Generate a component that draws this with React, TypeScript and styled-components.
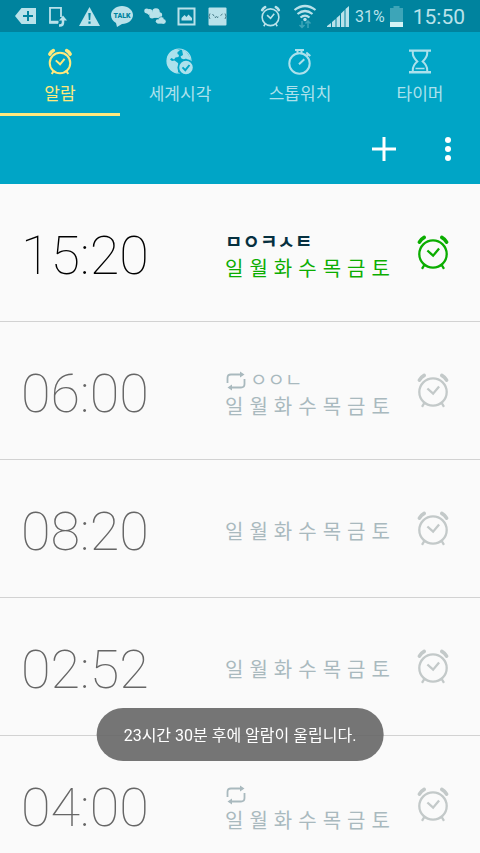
import React, { useState } from "react";
import styled, { createGlobalStyle } from "styled-components";

const GlobalStyle = createGlobalStyle`
  *, *::before, *::after { box-sizing: border-box; }
  body {
    margin: 0;
    background: #fafafa;
    font-family: Roboto, "Noto Sans CJK KR", sans-serif;
  }
  button { font: inherit; color: inherit; background: none; border: 0; padding: 0; cursor: pointer; }
  svg { display: block; flex: none; }
`;

const Screen = styled.div`
  display: flex;
  flex-direction: column;
  height: 100vh;
  overflow: hidden;
`;

const StatusBar = styled.header`
  display: flex;
  align-items: center;
  justify-content: space-between;
  flex: none;
  height: 32px;
  padding: 0 15px;
  background: #00839e;
  color: #b9e2ea;
`;

const StatusGroup = styled.div<{ $gap: number }>`
  display: flex;
  align-items: center;
  gap: ${(p) => p.$gap}px;
`;

const Battery = styled.span`
  font-size: 16px;
  line-height: 20px;
  margin: 2px -1px 0 0;
`;

const Clock = styled.time`
  font-size: 21px;
  line-height: 32px;
  margin: 2px 0 0 4px;
`;

const Tabs = styled.nav`
  display: grid;
  grid-template-columns: repeat(4, 1fr);
  flex: none;
  height: 84px;
  background: #00a5c6;
`;

const Tab = styled.button<{ $active: boolean }>`
  display: flex;
  flex-direction: column;
  align-items: center;
  gap: 7px;
  padding-top: 16px;
  border-bottom: 3px solid ${(p) => (p.$active ? "#ffe97d" : "transparent")};
  color: ${(p) => (p.$active ? "#ffe97d" : "#ace1ec")};
  font-size: 17px;
  line-height: 24px;
`;

const ActionBar = styled.div`
  display: flex;
  justify-content: flex-end;
  align-items: center;
  flex: none;
  gap: 24px;
  height: 68px;
  padding: 0 16px 2px;
  background: #00a5c6;
  color: #ffffff;
`;

const IconButton = styled.button`
  display: grid;
  place-items: center;
  width: 32px;
  height: 40px;
  margin-left: 8px;
`;

const AlarmList = styled.ul`
  flex: 1;
  min-height: 0;
  margin: 0;
  padding: 0;
  list-style: none;
  overflow-y: auto;
  scrollbar-width: none;
`;

const AlarmRow = styled.li`
  display: flex;
  align-items: center;
  height: 138px;
  padding: 6px 30px 0 21px;
  border-bottom: 1px solid #d2d2d2;
`;

const AlarmTime = styled.time<{ $on: boolean }>`
  flex: 1;
  font-weight: 100;
  font-size: 54px;
  line-height: 64px;
  color: ${(p) => (p.$on ? "#000000" : "#666666")};
`;

const Details = styled.div`
  width: 165px;
  margin-right: 26px;
`;

const Caption = styled.div<{ $on: boolean }>`
  display: flex;
  align-items: center;
  gap: 3px;
  height: 26px;
  font-size: 19px;
  line-height: 26px;
  font-weight: ${(p) => (p.$on ? 700 : 400)};
  color: ${(p) => (p.$on ? "#06303f" : "#a9b9be")};
`;

const Days = styled.div<{ $on: boolean }>`
  display: flex;
  justify-content: space-between;
  font-size: 20px;
  line-height: 26px;
  color: ${(p) => (p.$on ? "#0bad00" : "#a9b9be")};
`;

const AlarmToggle = styled.button<{ $on: boolean }>`
  padding-bottom: 8px;
  color: ${(p) => (p.$on ? "#0bad00" : "#c3c9c9")};
`;

const Toast = styled.div`
  position: fixed;
  bottom: 92px;
  left: 50%;
  transform: translateX(-50%);
  padding: 15px 27px 13px;
  border-radius: 27px;
  background: rgba(102, 102, 102, 0.9);
  color: #ffffff;
  font-size: 16px;
  line-height: 25px;
  white-space: nowrap;
`;

function AlarmIcon({ width, height, stroke = 2.3, bell = 3.6 }: { width: number; height: number; stroke?: number; bell?: number }) {
  return (
    <svg width={width} height={height} viewBox="0 0 34 36" fill="none" stroke="currentColor" aria-hidden="true">
      <circle cx="17" cy="20" r="13.700" strokeWidth={stroke} />
      <path d="M11.400 16.500l5.700 5.200 6-7.200M8.600 30.500L6 34.800M25.400 30.500l2.600 4.300" strokeWidth={stroke} />
      <path d="M3.400 8.200Q5 5.200 8.200 3.400M30.600 8.200Q29 5.200 25.800 3.400" strokeWidth={bell} strokeLinecap="round" />
    </svg>
  );
}

function GlobeIcon() {
  return (
    <svg width="28" height="27" viewBox="0 0 28 27" fill="none" aria-hidden="true">
      <circle cx="13" cy="13" r="12" stroke="currentColor" strokeWidth="1.200" />
      <path
        fill="currentColor"
        d="M1.200 10C3 4.500 7 1.500 11 1.200L14 2.500 11.500 4 11.500 6 13 7 12.500 9 9.500 9.500 8 11.500 5.500 10 4 11.500 6 13 8.500 12.500 12 15 13 18 12 20.500 12 24.800C5 24.500 1 19 1 13ZM16 1.500L20 3.500 24 9 24.500 13 21.500 12 20 10.500 18 11.500 15.500 10.500 14.500 8.500 17 7Z"
      />
      <circle cx="20" cy="19.500" r="7.700" fill="currentColor" stroke="#00a5c6" strokeWidth="1.800" />
      <path d="M16.500 19.300l2.800 2.900 4.200-5.200" stroke="#00a5c6" strokeWidth="1.900" />
    </svg>
  );
}

function StopwatchIcon() {
  return (
    <svg width="26" height="27" viewBox="0 0 26 27" fill="none" stroke="currentColor" strokeWidth="2" aria-hidden="true">
      <circle cx="12.500" cy="15.500" r="10.200" />
      <path d="M8 2h9M10.500 2v3.500M14.500 2v3.500M19.300 4.500l4 3.600M21.200 6.300l-2 2M12 16.300l5.300-5" />
    </svg>
  );
}

function HourglassIcon() {
  return (
    <svg width="26" height="27" viewBox="0 0 26 27" fill="none" stroke="currentColor" strokeWidth="2" aria-hidden="true">
      <path d="M2 2.600h22M2 24.300h22" strokeWidth="2.400" />
      <path d="M5.800 3v2.500q0 3.500 4.500 8-4.500 4-4.500 8.500v2M20.200 3v2.500q0 3.500-4.500 8 4.500 4 4.500 8.500v2" />
      <path d="M8.500 20.500h9" strokeWidth="1.500" />
    </svg>
  );
}

function RepeatIcon() {
  return (
    <svg width="22" height="20" viewBox="0 0 22 20" fill="none" stroke="currentColor" strokeWidth="1.800" aria-hidden="true">
      <path d="M2.500 12V7q0-3.500 3.500-3.500H16M19.500 8v5q0 3.500-3.500 3.500H6" />
      <path d="M15 .6L19.500 3.500 15 6.400ZM7 13.600L2.500 16.500 7 19.400Z" fill="currentColor" stroke="none" />
    </svg>
  );
}

function NotificationIcons() {
  return (
    <StatusGroup $gap={11} aria-label="알림">
      <svg width="22" height="18" viewBox="0 0 22 18">
        <path d="M0 9L6.500 1H21v16H6.500Z" fill="currentColor" />
        <path d="M13 4v10M8 9h10" stroke="#00839e" strokeWidth="2" />
      </svg>
      <svg width="20" height="21" viewBox="0 0 20 21" fill="none" stroke="currentColor">
        <path d="M13 11V1.800H2v15h8" strokeWidth="1.800" />
        <path d="M1.500 16h9M11 19.500h1q3 0 3-3V14" strokeWidth="2.500" />
        <path d="M11 14.500L15 9.500 19 14.500Z" fill="currentColor" stroke="none" />
      </svg>
      <svg width="21" height="19" viewBox="0 0 21 19">
        <path d="M10.500 0L21 19H0Z" fill="currentColor" />
        <path d="M9.300 6h2.400l-.5 7h-1.400ZM9.400 14.500h2.200v2.200H9.400Z" fill="#00839e" />
      </svg>
      <svg width="22" height="21" viewBox="0 0 22 21">
        <path d="M11 0C17 0 22 4 22 9s-5 9-11 9L6 21 5 17C2 15.500 0 12.500 0 9 0 4 5 0 11 0Z" fill="currentColor" />
        <text x="11" y="11.500" textAnchor="middle" fontSize="7" fontWeight="900" fill="#00839e">TALK</text>
      </svg>
      <svg width="22" height="18" viewBox="0 0 23 18" fill="currentColor">
        <circle cx="2.800" cy="3.800" r="2.600" />
        <circle cx="6" cy="4.500" r="2.800" />
        <path d="M2 5l4-3 2 3-3 3Z" />
        <circle cx="12.500" cy="5" r="4" />
        <circle cx="8.500" cy="8.500" r="3" />
        <circle cx="16" cy="8" r="3" />
        <path d="M8 8h8v3H8Z" />
        <circle cx="18" cy="12.800" r="3" stroke="#00839e" strokeWidth=".6" />
        <circle cx="14.500" cy="14.500" r="2.200" />
        <circle cx="20.500" cy="14.700" r="2.300" />
        <path d="M14 13.500h7V17h-7Z" />
      </svg>
      <svg width="19" height="19" viewBox="0 0 19 19">
        <rect x="1.500" y="1.500" width="16" height="16" fill="none" stroke="currentColor" strokeWidth="2" />
        <path d="M4.500 13.500v-2.500l3-3 2 2 2-2.500 3.500 3.500v2.500Z" fill="currentColor" />
      </svg>
      <svg width="22" height="19" viewBox="3 0 22 19">
        <rect width="18" height="18" x="4.500" y=".5" rx="1" fill="currentColor" />
        <path d="M6 6.500q-2 3 0 5.500M21 6.500q2 3 0 5.500M8.500 7l1.500 2M16.500 8.500l2-1.500M11 9.500q0 2.500 1.500 0 1.500 2.500 1.500 0" fill="none" stroke="#3e7480" strokeWidth=".9" />
      </svg>
    </StatusGroup>
  );
}

function SystemIcons() {
  return (
    <StatusGroup $gap={6}>
      <AlarmIcon width={21} height={22} stroke={2.6} bell={4.4} />
      <svg width="34" height="26" viewBox="-4 0 34 26" fill="none" stroke="currentColor" strokeWidth="2.200">
        <path d="M3.500 7Q14-1 24.500 7M6.500 11q7.500-6 15 0M9.500 14.500q4.500-3.800 9 0" />
        <circle cx="14" cy="16.500" r="1.700" fill="currentColor" stroke="none" />
        <path d="M11 18v7M8.500 22l2.500 2.500 2.500-2.500M17 25v-7M14.500 20.500L17 18l2.500 2.500" stroke="#3da5b8" strokeWidth="1.500" />
      </svg>
      <svg width="22" height="22" viewBox="0 0 22 22" fill="currentColor">
        <path d="M0 22v-1l4-3v4ZM5 22v-5l3.500-3v8ZM9.500 22v-9l3.500-3v12ZM14 22V8.500L17.500 5v17ZM18.500 22V4L22 1v21Z" />
      </svg>
      <Battery>31%</Battery>
      <svg width="13" height="21" viewBox="0 0 13 21">
        <path d="M0 2h3.500V0h6v2H13v19H0Z" fill="#3da5b8" />
        <path d="M0 16h13v5H0Z" fill="#d4f3f5" />
      </svg>
      <Clock>15:50</Clock>
    </StatusGroup>
  );
}

const tabs = [
  { label: "알람", icon: <AlarmIcon width={26} height={27} stroke={2.7} bell={4.6} /> },
  { label: "세계시각", icon: <GlobeIcon /> },
  { label: "스톱워치", icon: <StopwatchIcon /> },
  { label: "타이머", icon: <HourglassIcon /> },
];

const initialAlarms = [
  { time: "15:20", title: "ㅁㅇㅋㅅㅌ", repeat: false, on: true },
  { time: "06:00", title: "ㅇㅇㄴ", repeat: true, on: false },
  { time: "08:20", title: "", repeat: false, on: false },
  { time: "02:52", title: "", repeat: false, on: false },
  { time: "04:00", title: "", repeat: true, on: false },
];

const weekdays = ["일", "월", "화", "수", "목", "금", "토"];

export default function App() {
  const [activeTab, setActiveTab] = useState(0);
  const [alarms, setAlarms] = useState(initialAlarms);

  const toggle = (index: number) =>
    setAlarms((list) => list.map((a, i) => (i === index ? { ...a, on: !a.on } : a)));

  return (
    <Screen>
      <GlobalStyle />
      <StatusBar>
        <NotificationIcons />
        <SystemIcons />
      </StatusBar>
      <Tabs>
        {tabs.map((tab, i) => (
          <Tab key={tab.label} type="button" $active={i === activeTab} onClick={() => setActiveTab(i)}>
            {tab.icon}
            {tab.label}
          </Tab>
        ))}
      </Tabs>
      <ActionBar>
        <IconButton type="button" aria-label="알람 추가">
          <svg width="24" height="24" viewBox="0 0 24 24" stroke="currentColor" strokeWidth="3">
            <path d="M12 0v24M0 12h24" />
          </svg>
        </IconButton>
        <IconButton type="button" aria-label="더보기">
          <svg width="6" height="24" viewBox="0 0 6 24" fill="currentColor">
            <circle cx="3" cy="3" r="3" />
            <circle cx="3" cy="12" r="3" />
            <circle cx="3" cy="21" r="3" />
          </svg>
        </IconButton>
      </ActionBar>
      <AlarmList>
        {alarms.map((alarm, i) => (
          <AlarmRow key={alarm.time}>
            <AlarmTime $on={alarm.on}>{alarm.time}</AlarmTime>
            <Details>
              {(alarm.title || alarm.repeat) && (
                <Caption $on={alarm.on}>
                  {alarm.repeat && <RepeatIcon />}
                  {alarm.title}
                </Caption>
              )}
              <Days $on={alarm.on}>
                {weekdays.map((day) => (
                  <span key={day}>{day}</span>
                ))}
              </Days>
            </Details>
            <AlarmToggle
              type="button"
              $on={alarm.on}
              aria-pressed={alarm.on}
              aria-label={`${alarm.time} 알람`}
              onClick={() => toggle(i)}
            >
              <AlarmIcon width={34} height={36} />
            </AlarmToggle>
          </AlarmRow>
        ))}
      </AlarmList>
      <Toast role="status">23시간 30분 후에 알람이 울립니다.</Toast>
    </Screen>
  );
}
